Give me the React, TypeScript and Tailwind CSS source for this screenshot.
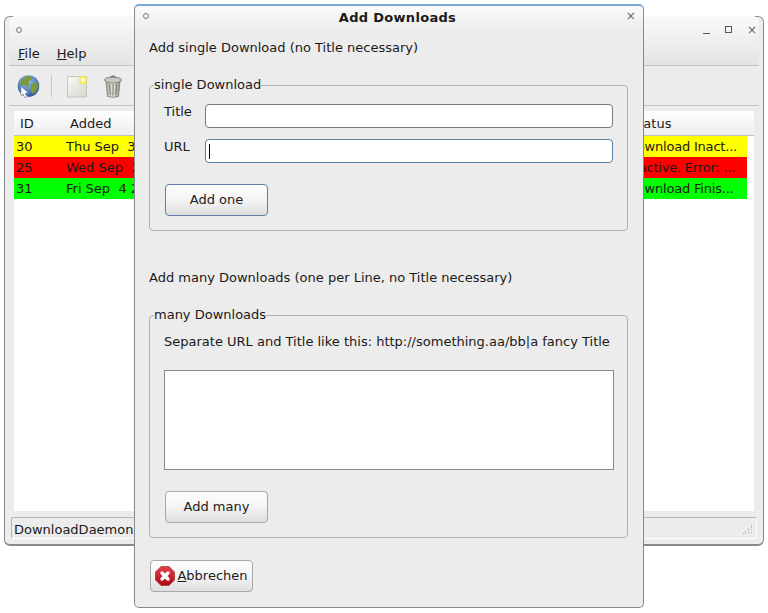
const font = "[font-family:'DejaVu_Sans',sans-serif]";

function GlobeIcon() {
  return (
    <svg width="24" height="24" viewBox="0 0 24 24">
      <defs>
        <radialGradient id="sea" cx="0.45" cy="0.3" r="0.8">
          <stop offset="0" stopColor="#9cc4ee" />
          <stop offset="1" stopColor="#1c4a92" />
        </radialGradient>
      </defs>
      <circle cx="12.500" cy="12" r="10.8" fill="url(#sea)" />
      <path d="M8 3.500c3-1.500 6-1.500 8-.5l-.5 3-3 1 1 3-2 3-3-2-3 .5-2-2 2-3zM15 10l6-1.500 1.500 4-3.500 6-3 1-1.500-4z" fill="#7d9a3a" />
      <path d="M5 12.500v9.500l2.200-2 2 4 2-1-2-3.800 3-.4z" fill="#fff" stroke="#8a93a0" strokeWidth="0.7" />
    </svg>
  );
}

function NewDocIcon() {
  return (
    <svg width="24" height="26" viewBox="0 0 24 26">
      <defs>
        <linearGradient id="page" x1="0" y1="0" x2="1" y2="1">
          <stop offset="0" stopColor="#fbfbf8" />
          <stop offset="1" stopColor="#d6d6ce" />
        </linearGradient>
      </defs>
      <path d="M1.500 3.500h19v20.500h-19z" fill="url(#page)" stroke="#c4c4bc" />
      <circle cx="17" cy="7" r="4.500" fill="#f3e84a" opacity="0.75" />
      <path d="M17 3.500l1 2.500 2.500 1-2.500 1-1 2.500-1-2.500-2.500-1 2.500-1z" fill="#fffde0" />
    </svg>
  );
}

function TrashIcon() {
  return (
    <svg width="20" height="24" viewBox="0 0 20 24">
      <defs>
        <linearGradient id="can" x1="0" y1="0" x2="1" y2="0">
          <stop offset="0" stopColor="#a8a8a2" />
          <stop offset="0.5" stopColor="#e6e6e0" />
          <stop offset="1" stopColor="#8e8e88" />
        </linearGradient>
      </defs>
      <path d="M3 7l1.500 15.500q5.500 1.500 11 0L17 7z" fill="url(#can)" stroke="#77776f" strokeWidth="0.8" />
      <path d="M6.500 10l.8 11M10 10v11.500M13.500 10l-.8 11" stroke="#77776f" strokeWidth="1" />
      <ellipse cx="10" cy="6" rx="8.500" ry="3" fill="#c8c8c2" stroke="#77776f" strokeWidth="0.8" />
      <path d="M7.500 3.500q2.500-2.500 5 0" fill="none" stroke="#77776f" strokeWidth="1.200" />
    </svg>
  );
}

function StopIcon() {
  return (
    <svg width="20" height="20" viewBox="0 0 20 20">
      <defs>
        <linearGradient id="stop" x1="0" y1="0" x2="0" y2="1">
          <stop offset="0" stopColor="#e2434c" />
          <stop offset="1" stopColor="#ad0a12" />
        </linearGradient>
      </defs>
      <path d="M6 .5h8l5.500 5.500v8L14 19.500H6L.5 14V6z" fill="url(#stop)" stroke="#a0161c" strokeWidth="0.6" />
      <path d="M7 7l6 6M13 7l-6 6" stroke="#fff" strokeWidth="3.400" strokeLinecap="round" />
    </svg>
  );
}

function Row({ id, added, status, color }: { id: string; added: string; status: string; color: string }) {
  return (
    <div className={`flex h-[21px] items-center w-[733px] text-[#1a1a1a] whitespace-pre ${color}`}>
      <span className="w-[52px] shrink-0 pl-[2px]">{id}</span>
      <span className="w-[561px] shrink-0">{added}</span>
      <span className="tracking-[-0.2px]">{status}</span>
    </div>
  );
}

function MainWindow() {
  return (
    <div className="absolute left-[4px] top-[16px] w-[760px] h-[530px] flex flex-col rounded-t-[6px] rounded-b-[6px] border border-[#8a8a8a] border-b-2 bg-[#ececec]">
      <div className="h-[50px] shrink-0 mx-[4px] border-b border-[#c4c4c4] bg-gradient-to-b from-[#fafafa] to-[#e4e4e4] -mt-px rounded-t-[6px]">
        <div className="flex items-center justify-between h-[23px] pl-[7px] pr-[2px] pt-[4px]">
          <span className="w-[6px] h-[6px] rounded-full border border-[#777]" />
          <div className="flex items-center gap-[15px] text-[#666]">
            <span className="w-[7px] h-[8px] border-b border-[#555]" />
            <span className="w-[7px] h-[7px] border border-[#555]" />
            <span className="text-[12px] leading-none">×</span>
          </div>
        </div>
        <div className="flex gap-[17px] pl-[9px] pt-[5px] text-[#1a1a1a]">
          <span><u>F</u>ile</span>
          <span><u>H</u>elp</span>
        </div>
      </div>
      <div className="h-[40px] shrink-0 mx-[4px] border-b border-[#c4c4c4] flex items-center pl-[7px]">
        <GlobeIcon />
        <div className="w-px h-[22px] bg-[#c8c8c8] ml-[11px] mr-[14px]" />
        <NewDocIcon />
        <div className="w-[13px]" />
        <TrashIcon />
      </div>
      <div className="mt-[5px] mx-[9px] h-[400px] shrink-0 bg-white">
        <div className="h-[25px] flex items-center bg-gradient-to-b from-[#ffffff] to-[#eeeeee] border-b border-[#c0c0c0] text-[#1a1a1a] pl-[6px] pt-[2px]">
          <span className="w-[50px]">ID</span>
          <span className="w-[560px]">Added</span>
          <span>Status</span>
        </div>
        <div>
          <Row id="30" added="Thu Sep  3" status="Download Inact..." color="bg-[#ffff00]" />
          <Row id="25" added="Wed Sep  2" status="Inactive. Error: ..." color="bg-[#ff0000]" />
          <Row id="31" added="Fri Sep  4 2" status="Download Finis..." color="bg-[#00ff00]" />
        </div>
      </div>
      <div className="relative mt-[6px] mx-[6px] h-[22px] shrink-0 border border-[#b8b8b8] border-r-white border-b-white flex items-center pl-[2px] pt-[3px] text-[#1a1a1a]">
        DownloadDaemon
        <svg className="absolute right-[2px] bottom-[2px]" width="12" height="12" viewBox="0 0 12 12" fill="#a8a8a8">
          <rect x="9" y="1" width="1" height="1" />
          <rect x="9" y="3" width="1" height="1" />
          <rect x="6" y="4" width="1" height="1" />
          <rect x="9" y="5" width="1" height="1" />
          <rect x="6" y="6" width="1" height="1" />
          <rect x="3" y="7" width="1" height="1" />
          <rect x="9" y="8" width="1" height="1" />
          <rect x="6" y="8" width="1" height="1" />
          <rect x="1" y="9" width="1" height="1" />
          <rect x="3" y="9" width="1" height="1" />
        </svg>
      </div>
    </div>
  );
}

function Button({ children, focused, className }: { children: React.ReactNode; focused?: boolean; className?: string }) {
  return (
    <div
      className={`w-[103px] h-[32px] flex items-center justify-center rounded-[4px] border bg-gradient-to-b from-[#fdfdfd] via-[#f4f4f4] to-[#dedede] text-[#1a1a1a] ${
        focused ? "border-[#5d7fa8]" : "border-[#a8a8a8]"
      } ${className ?? ""}`}
    >
      {children}
    </div>
  );
}

function Group({ label, className, children }: { label: string; className: string; children: React.ReactNode }) {
  return (
    <div className={`relative mx-[14px] w-[479px] rounded-[4px] border border-[#b0b0b0] ${className}`}>
      <span className="absolute left-[4px] -top-[10px] bg-[#ececec] leading-[18px] text-[#1a1a1a]">{label}</span>
      {children}
    </div>
  );
}

function Dialog() {
  return (
    <div className="absolute left-[134px] top-[4px] w-[510px] h-[604px] flex flex-col rounded-[5px] border border-[#8a8a8a] border-t-[#7ba6d8] border-t-2 bg-[#ececec] text-[#1a1a1a]">
      <div className="relative h-[24px] shrink-0 flex items-center justify-center pl-[17px] bg-gradient-to-b from-[#fafafa] to-[#ececec] rounded-t-[5px] font-bold tracking-[0.3px]">
        Add Downloads
        <span className="absolute left-[8px] top-[7px] w-[6px] h-[6px] rounded-full border border-[#777]" />
        <span className="absolute right-[7px] top-[4px] text-[12px] leading-none font-normal text-[#666]">×</span>
      </div>
      <div className="h-[18px] shrink-0 mt-[9px] ml-[14px] leading-[18px]">Add single Download (no Title necessary)</div>
      <Group label="single Download" className="mt-[28px] h-[146px] shrink-0">
        <div className="flex items-center pl-[14px] pt-[18px]">
          <span className="w-[41px] -mt-[9px]">Title</span>
          <div className="w-[408px] h-[24px] rounded-[4px] border border-[#7a7a7a] bg-white" />
        </div>
        <div className="flex items-center pl-[14px] pt-[11px]">
          <span className="w-[41px] -mt-[9px]">URL</span>
          <div className="w-[408px] h-[24px] rounded-[4px] border border-[#5d7fa8] bg-white flex items-center pl-[3px]">
            <span className="w-px h-[15px] bg-black" />
          </div>
        </div>
        <Button focused className="ml-[15px] mt-[21px]">Add one</Button>
      </Group>
      <div className="h-[18px] shrink-0 mt-[38px] ml-[14px] leading-[18px]">Add many Downloads (one per Line, no Title necessary)</div>
      <Group label="many Downloads" className="mt-[28px] h-[223px] shrink-0">
        <div className="pl-[14px] pt-[17px] leading-[18px]">Separate URL and Title like this: http://something.aa/bb|a fancy Title</div>
        <div className="ml-[14px] mt-[19px] w-[450px] h-[100px] border border-[#8a8a8a] bg-white" />
        <Button className="ml-[15px] mt-[21px]">Add many</Button>
      </Group>
      <Button className="ml-[15px] mt-[22px] gap-[2px] shrink-0">
        <StopIcon />
        <span><u>A</u>bbrechen</span>
      </Button>
    </div>
  );
}

export default function App() {
  return (
    <div className={`relative w-[768px] h-[613px] overflow-hidden bg-white text-[13px] ${font}`}>
      <MainWindow />
      <Dialog />
    </div>
  );
}
